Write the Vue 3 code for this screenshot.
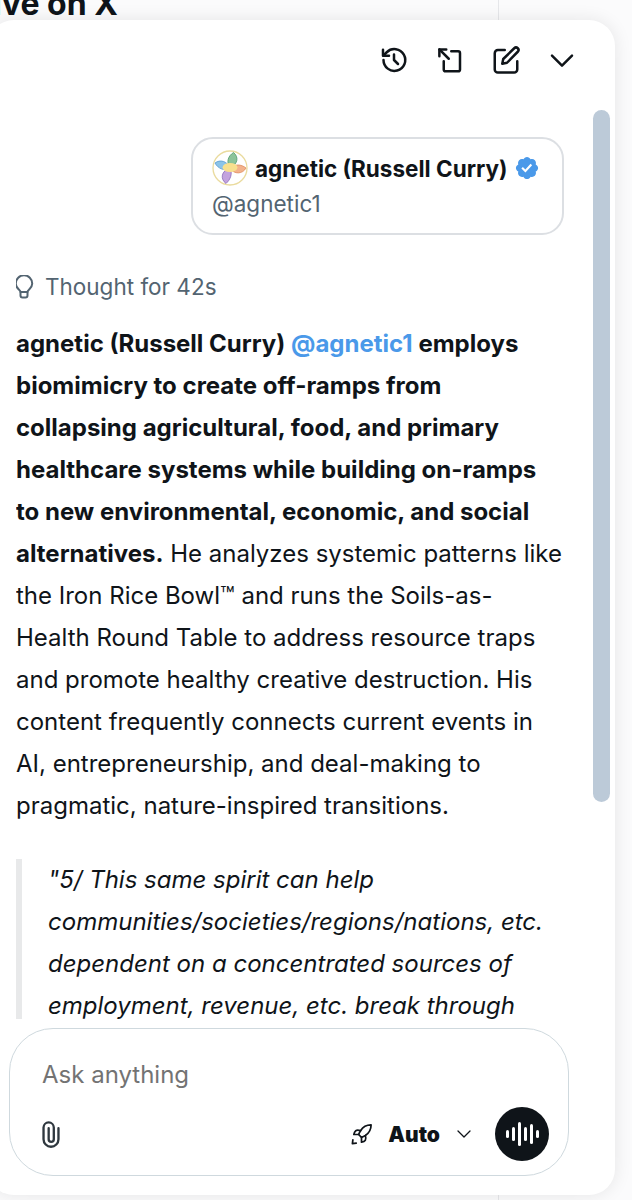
<template>
  <div class="page">
    <div class="divider"></div>
    <div class="behind"><span>Live on X</span></div>

    <section class="panel">
      <header class="toolbar">
        <button v-for="icon in toolbarIcons" :key="icon.name" class="tool" :aria-label="icon.name">
          <svg viewBox="0 0 24 24" width="30" height="30" fill="none" stroke="#0f1419" stroke-width="2" stroke-linecap="round" stroke-linejoin="round">
            <path v-for="d in icon.paths" :key="d" :d="d" />
          </svg>
        </button>
      </header>

      <div class="scrollbar"></div>

      <div class="thread">
        <div class="user-card">
          <div class="name-row">
            <svg class="avatar" viewBox="0 0 36 36" width="36" height="36">
              <circle cx="18" cy="18" r="17" fill="none" stroke="#eadb9e" stroke-width="1.3" />
              <path d="M18 18C14 12 16 6 21.500 2.500 27 7 26 14 18 18z" fill="#8cc49a" stroke="#4f9a6b" stroke-width=".8" />
              <path d="M18 19C13 21 6 19 3 13c5-4 13-2 15 6z" fill="#8cc4e8" stroke="#5a9bd0" stroke-width=".8" />
              <path d="M18 18c3 6 0 12-4 15.500C8 29 9 21 18 18z" fill="#c3a3de" stroke="#8a68b8" stroke-width=".8" />
              <path d="M18 18c5-4 11-4 16 0-3 6-12 7-16 0z" fill="#f3b28c" stroke="#e08a5a" stroke-width=".8" />
              <ellipse cx="18" cy="17.500" rx="7.500" ry="4.500" fill="#f8e08e" />
            </svg>
            <strong>agnetic (Russell Curry)</strong>
            <svg class="badge" viewBox="0 0 24 24" width="26" height="26">
              <path fill="#fff" d="M7 8h10v9H7z" />
              <path fill="#4a99e9" d="M22.25 12c0-1.43-.88-2.67-2.19-3.34.46-1.39.2-2.9-.81-3.91s-2.52-1.27-3.91-.81c-.66-1.31-1.91-2.19-3.34-2.19s-2.67.88-3.33 2.19c-1.4-.46-2.91-.2-3.92.81s-1.26 2.52-.8 3.91c-1.31.67-2.2 1.91-2.2 3.34s.89 2.67 2.2 3.34c-.46 1.39-.21 2.9.8 3.91s2.52 1.26 3.91.81c.67 1.31 1.91 2.19 3.34 2.19s2.68-.88 3.34-2.19c1.39.45 2.9.2 3.91-.81s1.27-2.52.81-3.91c1.31-.67 2.19-1.91 2.19-3.34zm-11.71 4.2L6.8 12.46l1.41-1.42 2.26 2.26 4.8-5.23 1.47 1.36-6.2 6.77z" />
            </svg>
          </div>
          <div class="handle">@agnetic1</div>
        </div>

        <div class="thought">
          <svg viewBox="0 0 20 24" width="20" height="24" fill="none" stroke="#536471" stroke-width="2" stroke-linecap="round" stroke-linejoin="round">
            <path d="M6.500 17c0-2.200-5-3.400-4.700-8.500a8.200 8.200 0 0 1 16.400 0c.3 5.100-4.700 6.300-4.700 8.500z" />
            <path d="M6.500 17v3.500a2 2 0 0 0 2 2h3a2 2 0 0 0 2-2V17" />
          </svg>
          <span>Thought for 42s</span>
        </div>

        <p class="answer">
          <strong>agnetic (Russell Curry) <a href="#" class="mention">@agnetic1</a> employs biomimicry to create off-ramps from collapsing agricultural, food, and primary healthcare systems while building on-ramps to new environmental, economic, and social alternatives.</strong>
          He analyzes systemic patterns like the Iron Rice Bowl™ and runs the Soils-as-Health Round Table to address resource traps and promote healthy creative destruction. His content frequently connects current events in AI, entrepreneurship, and deal-making to pragmatic, nature-inspired transitions.
        </p>

        <blockquote class="quote">
          <p>"5/ This same spirit can help communities/societies/regions/nations, etc. dependent on a concentrated sources of employment, revenue, etc. break through the resource traps that hold them back</p>
        </blockquote>
      </div>

      <div class="composer">
        <div class="placeholder">Ask anything</div>
        <div class="composer-row">
          <svg class="clip" viewBox="0 0 24 24" width="28" height="30" fill="none" stroke="#2f383f" stroke-width="2" stroke-linecap="round" stroke-linejoin="round">
            <path d="M10 7v9.5a2.2 2.2 0 0 0 4.4 0V6.5a4.4 4.4 0 0 0-8.8 0V16.5a6.4 6.4 0 0 0 12.8 0V7" />
          </svg>
          <div class="model">
            <svg viewBox="0 0 24 24" width="23" height="23" fill="none" stroke="#0f1419" stroke-width="1.8" stroke-linecap="round" stroke-linejoin="round">
              <path d="m12 15-3-3a22 22 0 0 1 2-3.95A12.88 12.88 0 0 1 22 2c0 2.72-.78 7.5-6 11a22.35 22.35 0 0 1-4 2z" />
              <path d="M9 12H4s.55-3.03 2-4c1.62-1.08 5 0 5 0" />
              <path d="M12 15v5s3.03-.55 4-2c1.08-1.62 0-5 0-5" />
              <path d="M3 17.500 2.500 21.500 6.500 21" />
            </svg>
            <strong>Auto</strong>
            <svg class="caret" viewBox="0 0 16 16" width="16" height="16" fill="none" stroke="#0f1419" stroke-width="1.3" stroke-linecap="round" stroke-linejoin="round">
              <path d="m2 5 6 6 6-6" />
            </svg>
          </div>
          <button class="voice" aria-label="Voice">
            <span v-for="(h, i) in waveBars" :key="i" class="wave" :style="{ height: h + 'px' }"></span>
          </button>
        </div>
      </div>
    </section>
  </div>
</template>

<script setup>
const toolbarIcons = [
  {
    name: 'History',
    paths: [
      'M3.6 12a8.7 8.7 0 1 0 2.6-6.2L3.5 8.4',
      'M3.2 3.8v4.8H8',
      'M12 7.5V12l3.2 3.2'
    ]
  },
  {
    name: 'Expand',
    paths: [
      'M3.5 3.5 11 11',
      'M3.5 9V3.5H9',
      'M13 5h5.5a1.5 1.5 0 0 1 1.5 1.5v13a1.5 1.5 0 0 1-1.5 1.5h-10A1.5 1.5 0 0 1 7 19.500V13'
    ]
  },
  {
    name: 'New chat',
    paths: [
      'M11 4H5.500A2.500 2.500 0 0 0 3 6.500v13A2.500 2.500 0 0 0 5.500 22h13a2.500 2.500 0 0 0 2.500-2.500V13',
      'M9 15l.8-3.800L18.600 2.600a1.900 1.900 0 0 1 2.800 2.800L12.800 14.200z'
    ]
  },
  { name: 'Collapse', paths: ['M4 8.500l8 8 8-8'] }
]

const waveBars = [8, 14, 24, 14, 20, 8]
</script>

<style>
html,
body {
  margin: 0;
  background: #fff;
  overflow: hidden;
}
</style>

<style scoped>
.page {
  position: relative;
  width: 632px;
  height: 1200px;
  overflow: hidden;
  background: #fbfbfc;
  font-family: Inter, "Liberation Sans", sans-serif;
  color: #0f1419;
}

.divider {
  position: absolute;
  top: 0;
  bottom: 0;
  left: 498px;
  width: 1px;
  background: #e6e7ea;
}

.behind {
  height: 20px;
  overflow: hidden;
  display: flex;
  align-items: flex-end;
  margin-left: -25px;
  font-size: 32px;
  font-weight: 700;
  line-height: 32px;
}

.behind span {
  white-space: nowrap;
  margin-bottom: 0;
}

.panel {
  position: relative;
  display: flex;
  flex-direction: column;
  box-sizing: border-box;
  width: 627px;
  height: 1175px;
  margin-left: -12px;
  background: #fff;
  border-radius: 26px;
  box-shadow: 0 0 18px rgba(15, 20, 25, 0.09);
  padding: 0 0 19px 28px;
}

.toolbar {
  display: flex;
  justify-content: flex-end;
  gap: 26px;
  height: 80px;
  align-items: center;
  padding-right: 38px;
  flex-shrink: 0;
}

.tool {
  display: flex;
  width: 30px;
  height: 30px;
  padding: 0;
  border: 0;
  background: none;
}

.scrollbar {
  position: absolute;
  top: 90px;
  right: 5px;
  width: 17px;
  height: 692px;
  border-radius: 9px;
  background: #bccad8;
}

.thread {
  flex: 1;
  min-height: 0;
  overflow: hidden;
  width: 548px;
  font-size: 24px;
  line-height: 42px;
}

.user-card {
  box-sizing: border-box;
  width: 373px;
  height: 98px;
  margin: 37px 0 0 175px;
  padding: 11px 19px;
  border: 2px solid #dcdfe3;
  border-radius: 22px;
  font-size: 22.5px;
  line-height: 35px;
}

.name-row {
  display: flex;
  align-items: center;
  gap: 7px;
  white-space: nowrap;
}

.name-row strong {
  font-weight: 700;
}

.avatar {
  flex-shrink: 0;
}

.badge {
  flex-shrink: 0;
  margin-left: -1px;
}

.handle {
  color: #536471;
}

.thought {
  display: flex;
  align-items: center;
  gap: 11px;
  margin: 35px 0 0 -2px;
  height: 34px;
  font-size: 22.5px;
  color: #536471;
}

.answer {
  margin: 19px 0 0;
}

.answer strong {
  font-weight: 700;
}

.mention {
  color: #4a99e9;
  text-decoration: none;
}

.quote {
  margin: 41px 0 0;
  padding: 0 12px 0 26px;
  border-left: 6px solid #e8e9ea;
  font-style: italic;
}

.quote p {
  margin: -9px 0 0;
}

.composer {
  box-sizing: border-box;
  width: 560px;
  height: 148px;
  margin: 9px 0 0 -7px;
  flex-shrink: 0;
  padding: 0 19px 14px 32px;
  border: 1.5px solid #cfd9de;
  border-radius: 44px;
  display: flex;
  flex-direction: column;
  justify-content: space-between;
}

.placeholder {
  margin-top: 29px;
  font-size: 24px;
  line-height: 34px;
  color: #737373;
}

.composer-row {
  display: flex;
  align-items: center;
}

.clip {
  margin-left: -5px;
}

.model {
  display: flex;
  align-items: center;
  margin-left: auto;
  gap: 15px;
  font-size: 21px;
  font-weight: 700;
  margin-right: 23px;
}

.caret {
  margin-left: 1px;
}

.voice {
  display: flex;
  align-items: center;
  justify-content: center;
  gap: 3px;
  width: 54px;
  height: 54px;
  padding: 0;
  border: 0;
  border-radius: 50%;
  background: #0f1419;
}

.wave {
  width: 3px;
  border-radius: 2px;
  background: #fff;
}
</style>
